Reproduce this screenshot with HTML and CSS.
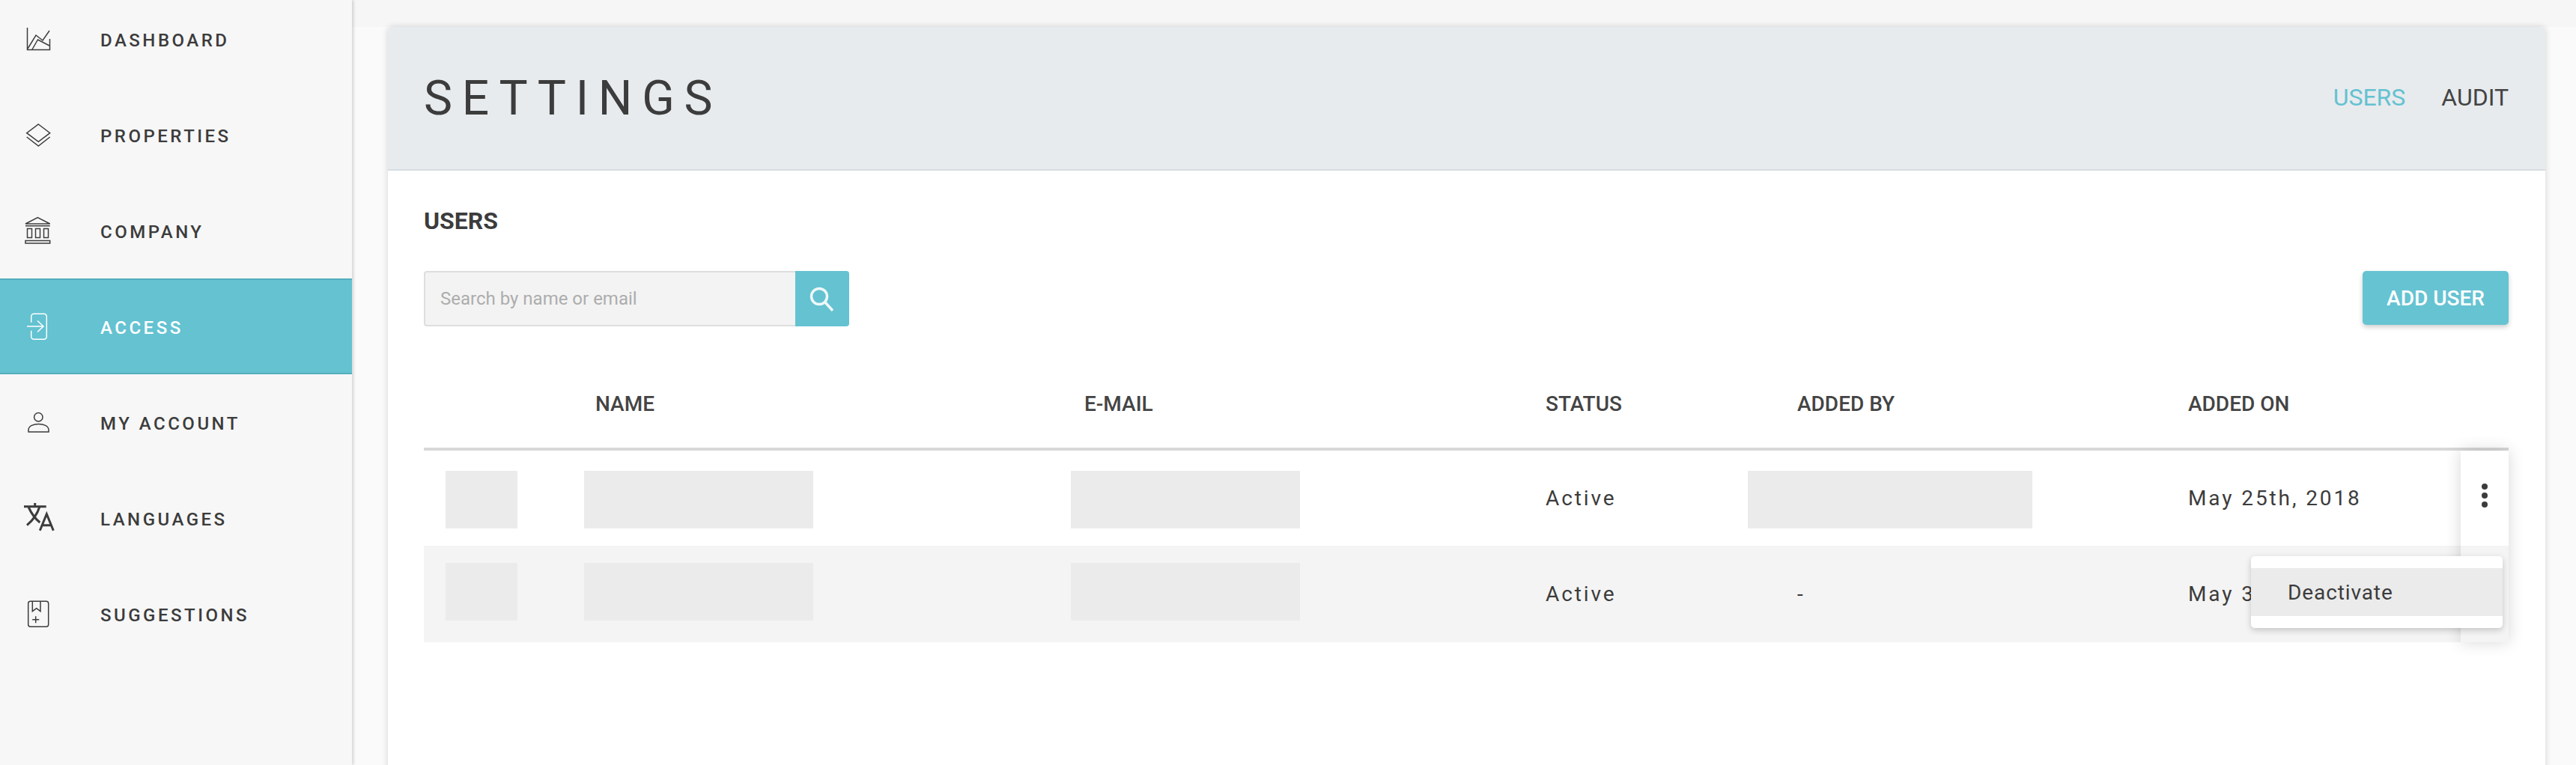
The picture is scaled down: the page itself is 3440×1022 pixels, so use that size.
FILE: index.html
```html
<!DOCTYPE html>
<html lang="en">
<head>
<meta charset="utf-8">
<title>Settings</title>
<link rel="stylesheet" href="styles.css">
</head>
<body>
<div class="app">
  <aside class="sidebar">
    <nav class="nav">
      <a class="nav-item">
        <svg class="nav-icon" viewBox="0 0 48 48"><path d="M6.5 9V38.5H36.5V24"/><path d="M7 37L18 19L27 26L36 13"/><path d="M13 38L20.5 25L36 33"/></svg>
        <span>DASHBOARD</span>
      </a>
      <a class="nav-item">
        <svg class="nav-icon" viewBox="0 0 48 48"><path d="M21.3 10L36.7 21.7L21.3 33.3L5.7 21.7Z"/><path d="M5.7 27L21.3 39L36.7 27"/></svg>
        <span>PROPERTIES</span>
      </a>
      <a class="nav-item">
        <svg class="nav-icon" viewBox="0 0 48 48"><path d="M4 15L20.3 6.7L36.7 15Z"/><path d="M4 17.7H36.7"/><rect x="6.5" y="21.5" width="6" height="12"/><rect x="17.5" y="21.5" width="6" height="12"/><rect x="28.5" y="21.5" width="6" height="12"/><rect x="4" y="37.5" width="32.7" height="3.5"/></svg>
        <span>COMPANY</span>
      </a>
      <a class="nav-item active">
        <svg class="nav-icon" viewBox="0 0 48 48"><path d="M11.7 18.7V10.8A3.5 3.5 0 0 1 15.2 7.3H28.8A3.5 3.5 0 0 1 32.3 10.8V37.8A3.5 3.5 0 0 1 28.8 41.3H15.2A3.5 3.5 0 0 1 11.7 37.8V29.7"/><path d="M6 24H28M20 16.5L28 24L20 31.5"/></svg>
        <span>ACCESS</span>
      </a>
      <a class="nav-item">
        <svg class="nav-icon" viewBox="0 0 48 48"><circle cx="21.3" cy="17.3" r="5.7"/><path d="M8 37V34.5C8 29 15 26.5 21.5 26.5S35 29 35 34.5V37Z"/></svg>
        <span>MY ACCOUNT</span>
      </a>
      <a class="nav-item">
        <svg class="nav-icon nav-icon-bold" viewBox="0 0 48 48"><path d="M2 8.7H31.7M16.7 4V8.7M23 8.7C20 18 14 27 6 33.7M8.3 10C12 18 17 25 23.3 30M23.3 40.7L32.3 18.7L41.3 40.7M26 33.7H38.5"/></svg>
        <span>LANGUAGES</span>
      </a>
      <a class="nav-item">
        <svg class="nav-icon" viewBox="0 0 48 48"><rect x="7.7" y="7.3" width="27" height="34" rx="3"/><path d="M13.3 7.3V20.7L18.7 16.7L24 20.7V7.3"/><path d="M17.7 27.2V36.2M13.2 31.7H22.2"/></svg>
        <span>SUGGESTIONS</span>
      </a>
    </nav>
  </aside>
  <main class="main">
    <section class="card">
      <header class="card-head">
        <h1 class="title">SETTINGS</h1>
        <div class="tabs">
          <a class="tab tab-on">USERS</a>
          <a class="tab">AUDIT</a>
        </div>
      </header>
      <div class="card-body">
        <h2 class="section-title">USERS</h2>
        <div class="toolbar">
          <div class="search">
            <div class="search-input">Search by name or email</div>
            <div class="search-btn">
              <svg class="search-icon" viewBox="0 0 34 34"><circle cx="13" cy="14" r="10.5"/><path d="M21 22L31 33"/></svg>
            </div>
          </div>
          <button class="add-btn">ADD USER</button>
        </div>
        <div class="table">
          <div class="row row-head">
            <div></div>
            <div class="th th-name">NAME</div>
            <div class="th th-mail">E-MAIL</div>
            <div class="th">STATUS</div>
            <div class="th th-by">ADDED BY</div>
            <div class="th">ADDED ON</div>
          </div>
          <div class="row row-body">
            <div class="ph-first"><div class="ph ph-s"></div></div>
            <div><div class="ph ph-m"></div></div>
            <div><div class="ph ph-m"></div></div>
            <div class="td">Active</div>
            <div><div class="ph ph-l"></div></div>
            <div class="td">May 25th, 2018</div>
          </div>
          <div class="row row-body row-alt">
            <div class="ph-first"><div class="ph ph-s"></div></div>
            <div><div class="ph ph-m"></div></div>
            <div><div class="ph ph-m"></div></div>
            <div class="td">Active</div>
            <div class="td td-by">-</div>
            <div class="td">May 31st, 2018</div>
          </div>
          <div class="actions">
            <div class="dots"><i></i><i></i><i></i></div>
          </div>
          <div class="menu">
            <div class="menu-item">Deactivate</div>
          </div>
        </div>
      </div>
    </section>
  </main>
</div>
</body>
</html>
```
FILE: styles.css
```css
* { box-sizing: border-box; }
html, body { margin: 0; height: 100%; }
body {
  font-family: Roboto, "Liberation Sans", sans-serif;
  color: #3c3c3c;
  background: #fafafa;
  overflow: hidden;
}
.app { display: flex; height: 1022px; overflow: hidden; }

.sidebar {
  width: 470px;
  flex: none;
  background: #f7f7f7;
  box-shadow: 2px 0 4px rgba(0,0,0,.16);
  position: relative;
  z-index: 2;
}
.nav { margin-top: -12px; display: flex; flex-direction: column; }
.nav-item {
  height: 128px;
  display: flex;
  align-items: center;
  padding-left: 30px;
  font-size: 24px;
  font-weight: 500;
  letter-spacing: 3.5px;
  color: #3c3c3c;
}
.nav-item span { margin-left: 56px; padding-top: 3px; }
.nav-item.active {
  background: #64c2d1;
  color: #fff;
  border-top: 2px solid #54aebd;
  border-bottom: 2px solid #54aebd;
}
.nav-icon {
  width: 48px;
  height: 48px;
  flex: none;
  fill: none;
  stroke: currentColor;
  stroke-width: 1.5;
}
.nav-icon-bold { stroke-width: 3; }

.main {
  flex: 1;
  min-width: 0;
  padding: 36px 41px 0 48px;
  background: linear-gradient(#f6f6f6 36px, #fafafa 36px);
}
.card {
  height: 1100px;
  background: #fff;
  border-radius: 6px 6px 0 0;
  box-shadow: 0 0 8px rgba(0,0,0,.16);
}
.card-head {
  height: 192px;
  padding: 0 49px 0 48px;
  display: flex;
  align-items: center;
  justify-content: space-between;
  background: #e8ebee;
  border-bottom: 2px solid #d5dde2;
  border-radius: 6px 6px 0 0;
}
.title {
  margin: 0;
  font-size: 64px;
  font-weight: 400;
  letter-spacing: 12.7px;
  color: #3c3c3c;
}
.tabs { display: flex; gap: 48px; font-size: 32px; padding-bottom: 3px; }
.tab { color: #444; }
.tab-on { color: #64c2d1; }

.card-body { padding: 45px 49px 0 48px; }
.section-title {
  margin: 0;
  font-size: 32px;
  line-height: 44px;
  font-weight: 700;
  color: #3c3c3c;
}
.toolbar {
  margin-top: 45px;
  display: flex;
  justify-content: space-between;
  align-items: flex-start;
}
.search { display: flex; width: 568px; height: 74px; }
.search-input {
  flex: 1;
  display: flex;
  align-items: center;
  padding-left: 20px;
  font-size: 24px;
  color: #adadad;
  background: #f3f3f3;
  border: 2px solid #dedede;
  border-right: 0;
  border-radius: 4px 0 0 4px;
}
.search-btn {
  width: 72px;
  display: flex;
  align-items: center;
  justify-content: center;
  background: #64c2d1;
  border-radius: 0 4px 4px 0;
}
.search-icon {
  width: 34px;
  height: 34px;
  fill: none;
  stroke: #eef8fa;
  stroke-width: 3.5;
}
.add-btn {
  width: 195px;
  height: 72px;
  padding: 0;
  border: 0;
  border-radius: 5px;
  background: #66c3d2;
  color: #fff;
  font: 500 28px Roboto, "Liberation Sans", sans-serif;
  box-shadow: 0 3px 6px rgba(0,0,0,.2);
}

.table { position: relative; margin-top: 39px; }
.row {
  display: grid;
  grid-template-columns: 214px 650px 634px 270px 588px 428px;
  align-items: center;
}
.row-head {
  height: 127px;
  border-bottom: 4px solid #d8d8d8;
}
.th { font-size: 28px; font-weight: 500; color: #444; padding-top: 6px; }
.th-name { padding-left: 15px; }
.th-mail { padding-left: 18px; }
.th-by { padding-left: 66px; }
.row-body { height: 127px; }
.row-alt { height: 129px; background: #f4f4f4; }
.td { font-size: 28px; letter-spacing: 2.9px; color: #3c3c3c; }
.td-by { padding-left: 66px; }
.ph { height: 77px; background: #ebebeb; margin-top: 4px; }
.row-alt .ph { margin-top: -6px; }
.ph-first { padding-left: 29px; }
.ph-s { width: 96px; }
.ph-m { width: 306px; }
.ph-l { width: 380px; }

.actions {
  position: absolute;
  top: 127px;
  right: 0;
  width: 64px;
  height: 256px;
  background: linear-gradient(#fff 127px, #f4f4f4 127px);
  box-shadow: 0 0 20px rgba(0,0,0,.16);
}
.dots {
  display: flex;
  flex-direction: column;
  align-items: center;
  gap: 4px;
  padding-top: 44px;
}
.dots i { width: 8px; height: 8px; border-radius: 50%; background: #3c3c3c; }
.menu {
  position: absolute;
  top: 268px;
  right: 8px;
  width: 336px;
  padding: 16px 0;
  background: #fff;
  border-radius: 5px;
  box-shadow: 0 3px 8px rgba(0,0,0,.2);
}
.menu-item {
  height: 64px;
  display: flex;
  align-items: center;
  padding-left: 49px;
  background: #ebebeb;
  font-size: 28px;
  letter-spacing: .9px;
  color: #3c3c3c;
}
```
